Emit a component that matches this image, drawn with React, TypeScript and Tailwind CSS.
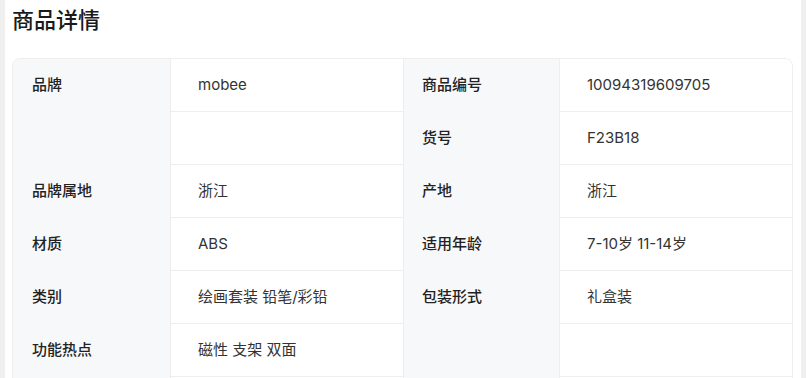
const rows: { label: string; value: string; label2: string; value2: string }[] = [
  { label: '品牌', value: 'mobee', label2: '商品编号', value2: '10094319609705' },
  { label: '', value: '', label2: '货号', value2: 'F23B18' },
  { label: '品牌属地', value: '浙江', label2: '产地', value2: '浙江' },
  { label: '材质', value: 'ABS', label2: '适用年龄', value2: '7-10岁 11-14岁' },
  { label: '类别', value: '绘画套装 铅笔/彩铅', label2: '包装形式', value2: '礼盒装' },
  { label: '功能热点', value: '磁性 支架 双面', label2: '', value2: '' },
  { label: '', value: '', label2: '', value2: '' },
]

function LabelCol({ items, className }: { items: string[]; className: string }) {
  return (
    <div className={`flex flex-col bg-[#f7f8fa] ${className}`}>
      {items.map((t, i) => (
        <div key={i} className="h-[53px] flex items-center font-medium text-[#222]">
          {t}
        </div>
      ))}
    </div>
  )
}

function ValueCol({ items, className }: { items: string[]; className: string }) {
  return (
    <div className={`flex flex-col border-l border-[#eeeeee] ${className}`}>
      {items.map((t, i) => (
        <div key={i} className="h-[53px] flex items-center border-b border-[#eeeeee] pl-[27px] text-[#333]">
          {t}
        </div>
      ))}
    </div>
  )
}

export default function App() {
  return (
    <div
      className="h-[378px] overflow-hidden bg-[#efefef] px-[5px]"
      style={{ fontFamily: 'Inter, "Noto Sans CJK SC", sans-serif' }}
    >
      <div className="h-full bg-white pl-[7px] pr-[8px]">
        <h1 className="pt-[6px] text-[22px] leading-[28px] font-medium text-[#1a1a1a]">商品详情</h1>
        <div className="mt-[24px] flex rounded-lg border border-[#eeeeee] overflow-hidden text-[15px]">
          <LabelCol items={rows.map(r => r.label)} className="w-[157px] pl-[19px]" />
          <ValueCol items={rows.map(r => r.value)} className="w-[233px]" />
          <LabelCol items={rows.map(r => r.label2)} className="w-[156px] pl-[18px] border-l border-[#eeeeee]" />
          <ValueCol items={rows.map(r => r.value2)} className="flex-1" />
        </div>
      </div>
    </div>
  )
}
